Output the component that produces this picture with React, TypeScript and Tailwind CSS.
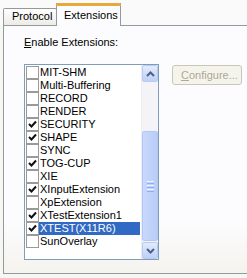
import React from 'react';

const items: { name: string; checked: boolean }[] = [
  { name: 'MIT-SHM', checked: false },
  { name: 'Multi-Buffering', checked: false },
  { name: 'RECORD', checked: false },
  { name: 'RENDER', checked: false },
  { name: 'SECURITY', checked: true },
  { name: 'SHAPE', checked: true },
  { name: 'SYNC', checked: false },
  { name: 'TOG-CUP', checked: true },
  { name: 'XIE', checked: false },
  { name: 'XInputExtension', checked: true },
  { name: 'XpExtension', checked: false },
  { name: 'XTestExtension1', checked: true },
  { name: 'XTEST(X11R6)', checked: true },
  { name: 'SunOverlay', checked: false },
];

const selected = 'XTEST(X11R6)';

function CheckBox({ checked }: { checked: boolean }) {
  return (
    <div className="w-[13px] h-[13px] shrink-0 border border-[#9a9a9a] bg-white flex items-center justify-center">
      {checked && (
        <svg width="9" height="9" viewBox="0 0 9 9">
          <path d="M1 4 L3.5 6.5 L8 1.5" stroke="#111" strokeWidth="2" fill="none" />
        </svg>
      )}
    </div>
  );
}

function ScrollButton({ up }: { up?: boolean }) {
  return (
    <div className="h-[17px] w-[16px] rounded-[2px] border border-[#b9cbf3] bg-gradient-to-b from-[#e3ebfd] to-[#bcd0f8] flex items-center justify-center">
      <svg width="9" height="6" viewBox="0 0 9 6">
        <path d={up ? 'M1 5 L4.5 1.5 L8 5' : 'M1 1 L4.5 4.5 L8 1'} stroke="#4d6185" strokeWidth="2" fill="none" />
      </svg>
    </div>
  );
}

export default function App() {
  return (
    <div
      className="w-[247px] h-[278px] overflow-hidden bg-[#f6f6f3] text-[11px] text-black"
      style={{ fontFamily: '"Liberation Sans", Arial, sans-serif' }}
    >
      {/* tab strip */}
      <div className="flex items-end pl-[3px] pt-[3px] h-[25px] bg-[#fafafb]">
        <div className="h-[17px] w-[54px] border border-b-0 border-[#919b9c] rounded-t-[2px] bg-gradient-to-b from-white to-[#ecebe6] pl-[8px] leading-[15px]">
          Protocol
        </div>
        <div className="relative z-10 -mb-px h-[23px] w-[65px] -ml-px border-x border-[#919b9c] bg-[#fcfcfe]">
          <div className="h-[3px] -mx-px bg-[#e6a93b] rounded-t-[2px]" />
          <div className="pl-[7px] pt-[2px] leading-[15px]">Extensions</div>
        </div>
      </div>

      {/* tab page */}
      <div className="h-[249px] ml-[3px] -mr-[4px] border border-[#919b9c] bg-gradient-to-b from-[#fcfcfe] from-80% to-[#f4f3ee] pl-[20px] pt-[10px]">
        <div className="leading-[13px]">
          <span className="underline">E</span>nable Extensions:
        </div>

        <div className="flex items-start mt-[15px]">
          <div className="w-[135px] h-[196px] border border-[#7f9db9] bg-white flex">
            <div className="flex-1 pt-[1px] pl-[1px]">
              {items.map((it) => (
                <div key={it.name} className="flex h-[13px]">
                  <CheckBox checked={it.checked} />
                  <div
                    className={
                      it.name === selected
                        ? 'flex-1 bg-[#316ac5] text-white leading-[13px] pl-[1px] mr-[1px]'
                        : 'flex-1 leading-[13px] pl-[1px]'
                    }
                  >
                    {it.name}
                  </div>
                </div>
              ))}
            </div>
            <div className="w-[17px] bg-[#f4f4f8] border-l border-[#eeedf0] flex flex-col">
              <ScrollButton up />
              <div className="flex-1 pt-[49px] pb-[1px]">
                <div className="h-[110px] w-[16px] rounded-[2px] border border-[#b4c8f6] bg-gradient-to-r from-[#c9d8fc] to-[#b9cdf8] flex flex-col items-center justify-center gap-[1px]">
                  <div className="w-[7px] h-px bg-[#eef3fe]" />
                  <div className="w-[7px] h-px bg-[#8cb0f8]" />
                  <div className="w-[7px] h-px bg-[#eef3fe]" />
                  <div className="w-[7px] h-px bg-[#8cb0f8]" />
                  <div className="w-[7px] h-px bg-[#eef3fe]" />
                  <div className="w-[7px] h-px bg-[#8cb0f8]" />
                </div>
              </div>
              <ScrollButton />
            </div>
          </div>

          <div className="ml-[13px] mt-px h-[20px] w-[70px] rounded-[3px] border border-[#c9c7ba] bg-[#f5f4ea] text-[#aca899] pl-[8px] leading-[18px]">
            <span className="underline">C</span>onfigure...
          </div>
        </div>
      </div>
    </div>
  );
}
